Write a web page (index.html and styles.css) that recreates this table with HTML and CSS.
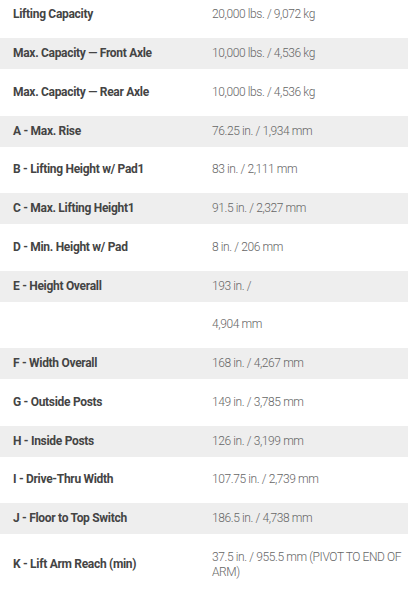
FILE: index.html
```html
<!DOCTYPE html>
<html>
<head>
<meta charset="utf-8">
<link rel="stylesheet" href="styles.css">
</head>
<body>
<div class="specs">
  <div class="row"><div class="label">Lifting Capacity</div><div class="value">20,000 lbs. / 9,072 kg</div></div>
  <div class="row"><div class="label">Max. Capacity — Front Axle</div><div class="value">10,000 lbs. / 4,536 kg</div></div>
  <div class="row"><div class="label">Max. Capacity — Rear Axle</div><div class="value">10,000 lbs. / 4,536 kg</div></div>
  <div class="row"><div class="label">A - Max. Rise</div><div class="value">76.25 in. / 1,934 mm</div></div>
  <div class="row"><div class="label">B - Lifting Height w/ Pad1</div><div class="value">83 in. / 2,111 mm</div></div>
  <div class="row"><div class="label">C - Max. Lifting Height1</div><div class="value">91.5 in. / 2,327 mm</div></div>
  <div class="row"><div class="label">D - Min. Height w/ Pad</div><div class="value">8 in. / 206 mm</div></div>
  <div class="row"><div class="label">E - Height Overall</div><div class="value">193 in. /</div></div>
  <div class="row"><div class="label"></div><div class="value">4,904 mm</div></div>
  <div class="row"><div class="label">F - Width Overall</div><div class="value">168 in. / 4,267 mm</div></div>
  <div class="row"><div class="label">G - Outside Posts</div><div class="value">149 in. / 3,785 mm</div></div>
  <div class="row"><div class="label">H - Inside Posts</div><div class="value">126 in. / 3,199 mm</div></div>
  <div class="row"><div class="label">I - Drive-Thru Width</div><div class="value">107.75 in. / 2,739 mm</div></div>
  <div class="row"><div class="label">J - Floor to Top Switch</div><div class="value">186.5 in. / 4,738 mm</div></div>
  <div class="row"><div class="label">K - Lift Arm Reach (min)</div><div class="value">37.5 in. / 955.5 mm (PIVOT TO END OF ARM)</div></div>
</div>
</body>
</html>
```
FILE: styles.css
```css
html, body {
  margin: 0;
  padding: 0;
  background: #ffffff;
}
body {
  font-family: "Roboto", "Liberation Sans", sans-serif;
  font-size: 12px;
  line-height: 15px;
  overflow: hidden;
}
.specs {
  margin-top: -8.5px;
  display: flex;
  flex-direction: column;
}
.row {
  display: grid;
  grid-template-columns: 212px 1fr;
  align-items: center;
  padding: 15.75px 0;
  background: #ffffff;
}
.row:nth-child(even) {
  background: #eeeeee;
  padding: 8px 0;
}
.label {
  padding-left: 13px;
  padding-right: 8px;
  font-weight: bold;
  letter-spacing: -0.3px;
  color: #444444;
}
.value {
  padding-right: 2px;
  font-weight: 300;
  letter-spacing: -0.4px;
  color: #666666;
}
```
